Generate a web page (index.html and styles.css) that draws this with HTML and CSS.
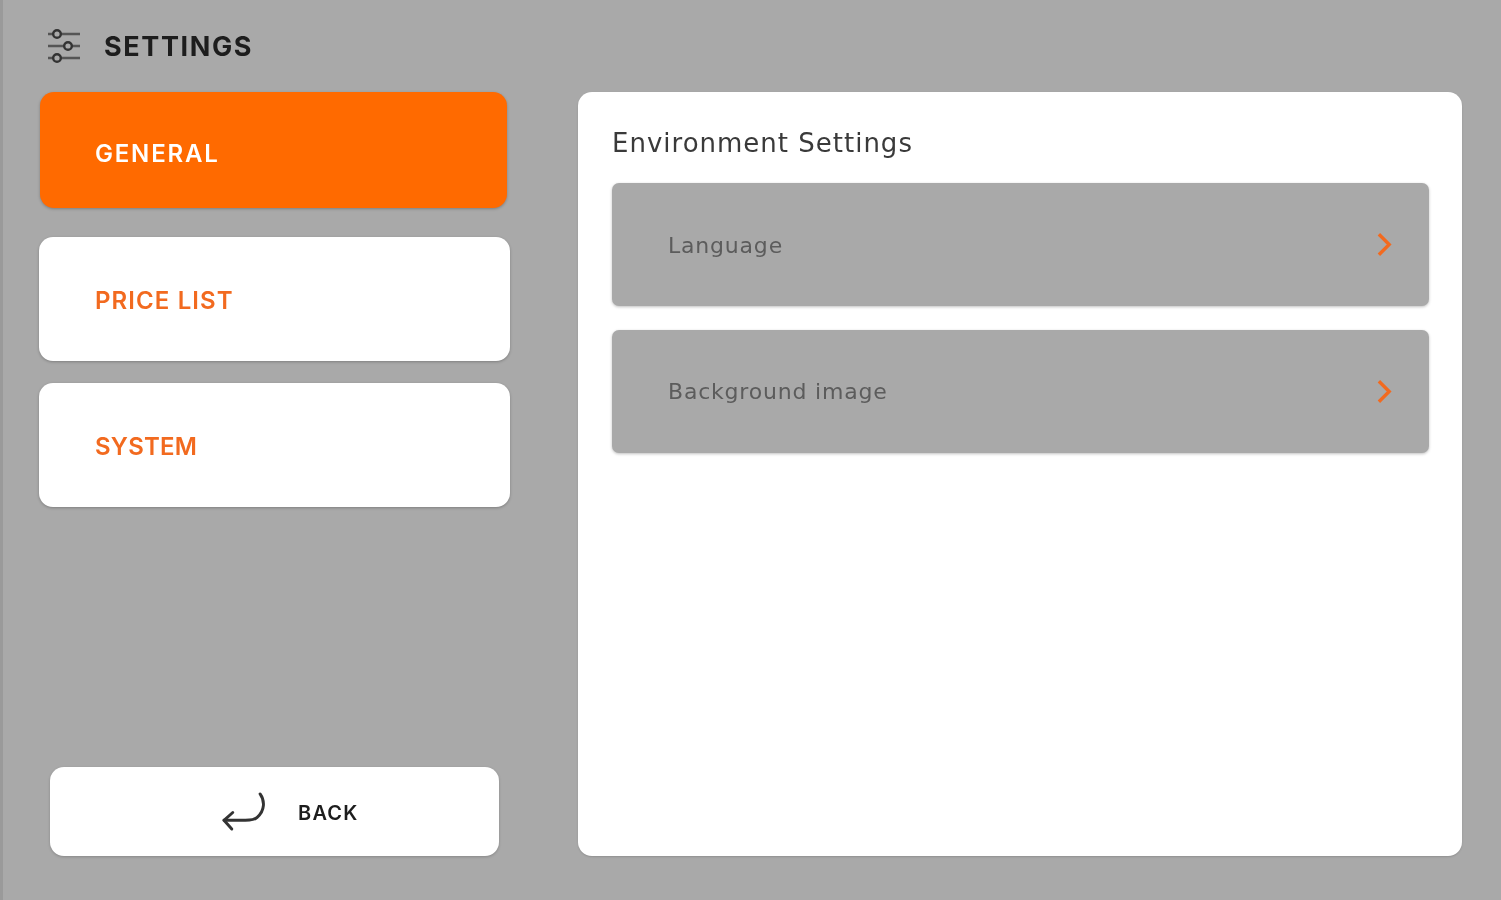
FILE: index.html
```html
<!DOCTYPE html>
<html lang="en">
<head>
<meta charset="utf-8">
<title>Settings</title>
<link rel="stylesheet" href="styles.css">
</head>
<body>
<div class="app">
  <header class="header">
    <svg class="settings-icon" viewBox="0 0 33 36" fill="none" stroke="#333" stroke-width="2.400">
      <path d="M0 6H5M13 6H32M0 18H16M24 18H32M0 30H5M13 30H32" stroke="#555"/>
      <circle cx="9" cy="6" r="3.800"/>
      <circle cx="20" cy="18" r="3.800"/>
      <circle cx="9" cy="30" r="3.800"/>
    </svg>
    <h1 class="title">SETTINGS</h1>
  </header>
  <div class="main">
    <nav class="sidebar">
      <a class="tab tab-active">GENERAL</a>
      <a class="tab tab-price">PRICE LIST</a>
      <a class="tab tab-system">SYSTEM</a>
      <button class="back">
        <svg class="back-icon" viewBox="0 0 46 42" fill="none" stroke="#333" stroke-width="3" stroke-linecap="round" stroke-linejoin="round">
          <path d="M40 3C45 10 45 20 37 27C34 30 30 30 25 30H3"/>
          <path d="M12 22L3 30L11 39"/>
        </svg>
        <span>BACK</span>
      </button>
    </nav>
    <section class="panel">
      <h2 class="panel-title">Environment Settings</h2>
      <div class="row">
        <span class="row-label">Language</span>
        <svg class="chevron" viewBox="0 0 16 26" fill="none" stroke="#f26a1f" stroke-width="3.600"><path d="M2 2L13 13L2 24"/></svg>
      </div>
      <div class="row">
        <span class="row-label">Background image</span>
        <svg class="chevron" viewBox="0 0 16 26" fill="none" stroke="#f26a1f" stroke-width="3.600"><path d="M2 2L13 13L2 24"/></svg>
      </div>
    </section>
  </div>
</div>
</body>
</html>
```
FILE: styles.css
```css
* { box-sizing: border-box; }
html, body { margin: 0; height: 100%; }
body {
  background: #a9a9a9;
  font-family: "Inter", "Liberation Sans", sans-serif;
  overflow: hidden;
}
.app {
  width: 1501px;
  height: 900px;
  border-left: 3px solid #9a9a9a;
  padding: 27px 39px 44px 36px;
  display: flex;
  flex-direction: column;
  filter: blur(0.5px);
}
.header {
  display: flex;
  align-items: center;
  gap: 23px;
  height: 37px;
  padding-left: 9px;
  margin-bottom: 28px;
}
.settings-icon { width: 33px; height: 36px; flex: none; }
.title {
  margin: 2px 0 0;
  font-size: 27px;
  font-weight: 700;
  color: #1d1d1d;
  letter-spacing: 1.6px;
}
.main { flex: 1; display: flex; min-height: 0; }
.sidebar {
  width: 471px;
  flex: none;
  display: flex;
  flex-direction: column;
  margin-right: 68px;
}
.tab {
  height: 124px;
  margin-bottom: 22px;
  background: #fff;
  border-radius: 14px;
  box-shadow: 0 1px 3px rgba(0,0,0,.25);
  color: #f26a1f;
  font-size: 24px;
  font-weight: 600;
  padding: 50px 0 0 56px;
  line-height: 28px;
}
.tab-price { letter-spacing: 1.1px; }
.tab-system { letter-spacing: 0.2px; }
.tab-active {
  height: 116px;
  margin: 0 3px 29px 1px;
  background: #ff6a00;
  color: #fff;
  padding: 48px 0 0 55px;
  letter-spacing: 1.8px;
}
.back {
  margin: auto 11px 0;
  height: 89px;
  background: #fff;
  border: 0;
  border-radius: 14px;
  box-shadow: 0 1px 3px rgba(0,0,0,.2);
  display: flex;
  align-items: center;
  padding: 2px 0 0 171px;
  gap: 32px;
  font-family: inherit;
  font-size: 20px;
  font-weight: 600;
  color: #1d1d1d;
  letter-spacing: 1.2px;
}
.back-icon { width: 45px; height: 41px; flex: none; margin-top: -2px; }
.panel {
  flex: 1;
  background: #fff;
  border-radius: 14px;
  padding: 34px 33px 0 34px;
  box-shadow: 0 1px 2px rgba(0,0,0,.15);
}
.panel-title {
  margin: 0 0 22px;
  font-family: "DejaVu Sans", sans-serif;
  font-size: 26px;
  line-height: 35px;
  font-weight: 400;
  color: #3a3a3a;
  letter-spacing: 1px;
}
.row {
  height: 123px;
  margin-bottom: 23.5px;
  background: #a9a9a9;
  border-radius: 7px;
  box-shadow: 0 1px 3px rgba(0,0,0,.25);
  display: flex;
  align-items: center;
  justify-content: space-between;
  padding: 0 37px 0 56px;
  font-family: "DejaVu Sans", sans-serif;
  font-size: 22px;
  color: #5c5c5c;
  letter-spacing: 0.8px;
}
.row-label { padding-top: 1px; }
.chevron { width: 15px; height: 25px; flex: none; }
```
